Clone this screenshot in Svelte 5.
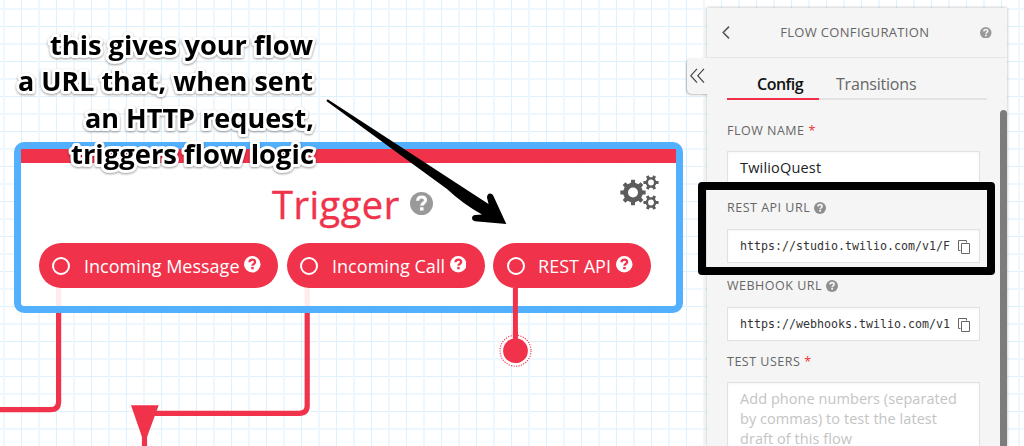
<script>
  const triggers = [
    { label: 'Incoming Message', width: 239.5, text: 155.5 },
    { label: 'Incoming Call', width: 198, text: 113 },
    { label: 'REST API', width: 158, text: 73 }
  ];
  const note = ['this gives your flow', 'a URL that, when sent', 'an HTTP request,', 'triggers flow logic'];

  function gear(cx, cy, outer, inner, hole, teeth) {
    const step = (Math.PI * 2) / teeth;
    const pt = (r, a) => `${(cx + r * Math.cos(a)).toFixed(2)} ${(cy + r * Math.sin(a)).toFixed(2)}`;
    let d = '';
    for (let i = 0; i < teeth; i++) {
      const a = i * step - Math.PI / 2 + (teeth === 6 ? step / 2 : 0);
      d += `${i ? 'L' : 'M'}${pt(inner, a - step * 0.27)}L${pt(outer, a - step * 0.19)}L${pt(outer, a + step * 0.19)}L${pt(inner, a + step * 0.27)}`;
    }
    return `${d}ZM${cx - hole} ${cy}a${hole} ${hole} 0 1 0 ${hole * 2} 0a${hole} ${hole} 0 1 0 ${-hole * 2} 0Z`;
  }
  const gears = gear(13, 17.5, 12.8, 9.9, 5, 8) + gear(31, 7.5, 7.7, 5.4, 2.9, 6) + gear(31, 27.5, 7.7, 5.4, 2.9, 6);
</script>

{#snippet help(size, bg, fg)}
  <svg class="help" width={size} height={size} viewBox="0 0 16 16">
    <circle cx="8" cy="8" r="8" fill={bg} />
    <path d="M5.300 6.100C5.400 4.400 6.500 3.500 8.100 3.500c1.600 0 2.700.9 2.700 2.300 0 2-2.600 1.900-2.600 3.700" fill="none" stroke={fg} stroke-width="2.200" />
    <rect x="7" y="10.600" width="2.400" height="2.300" fill={fg} />
  </svg>
{/snippet}

{#snippet copy()}
  <svg class="copy" width="14" height="15" viewBox="0 0 14 15" fill="none" stroke="#666" stroke-width="1">
    <path d="M3.500 11.500H1.500V1.500h8v2M4.500 4.500h8v10h-8z" />
  </svg>
{/snippet}

<main class="canvas">
  <svg class="layer" width="1024" height="446" fill="none" stroke="#f0324b" stroke-width="5.200">
    <path d="M58.600 288V402q0 7.700-8 7.700H0" />
    <path d="M307.200 288V405.500q0 7.800-8 7.800H150" />
    <path d="M144.500 430V446" />
    <path d="M131 405.300h27.700L147 437h-5z" fill="#f0324b" stroke="none" />
  </svg>

  <section class="node">
    <div class="bar"></div>
    <header>
      <h1>Trigger</h1>
      {@render help(23, '#999', '#fff')}
      <svg class="gears" width="40" height="36" viewBox="0 0 40 36"><path d={gears} fill="#5c5c5c" fill-rule="evenodd" /></svg>
    </header>
    <div class="pills">
      {#each triggers as t}
        <div class="pill" style:width="{t.width}px">
          <i></i>
          <svg class="name" width={t.text} height="30"><text x="0" y="22" textLength={t.text} lengthAdjust="spacingAndGlyphs">{t.label}</text></svg>
          {@render help(16.5, '#fff', '#f0324b')}
        </div>
      {/each}
    </div>
  </section>

  <svg class="layer" width="1024" height="446">
    <path d="M515.400 288v56" stroke="#f0324b" stroke-width="5" />
    <circle cx="515.500" cy="350.700" r="15.500" fill="#fff" stroke="#f0324b" stroke-width="1.100" stroke-dasharray="1.200 1.300" />
    <path d="M515.400 330v20" stroke="#f0324b" stroke-width="5" />
    <circle cx="515.500" cy="350.700" r="12.400" fill="#f0324b" />
  </svg>

  <aside class="panel">
    <button class="collapse" aria-label="Expand panel">
      <svg width="15" height="16" viewBox="0 0 15 16" fill="none" stroke="#444" stroke-width="1.200"><path d="M7 .8.800 7.700 7 14.600M14 .8 7.800 7.700 14 14.600" /></svg>
    </button>
    <div class="head">
      <svg width="8" height="13" viewBox="0 0 8 13" fill="none" stroke="#555" stroke-width="1.500"><path d="M7 .6 1.200 6.500 7 12.400" /></svg>
      <span class="title">FLOW CONFIGURATION</span>
      {@render help(11.5, '#999', '#f5f5f5')}
    </div>
    <nav>
      <span class="tab active">Config</span>
      <span class="tab">Transitions</span>
    </nav>
    <div class="form">
      <div class="label fn"><span>FLOW NAME</span><b>*</b></div>
      <div class="input name-in">TwilioQuest</div>
      <div class="label rest"><span>REST API URL</span>{@render help(12, '#8f8f8f', '#f5f5f5')}</div>
      <div class="input mono"><span>https://studio.twilio.com/v1/F</span>{@render copy()}</div>
      <div class="label web"><span>WEBHOOK URL</span>{@render help(12, '#8f8f8f', '#f5f5f5')}</div>
      <div class="input mono"><span>https://webhooks.twilio.com/v1</span>{@render copy()}</div>
      <div class="label users"><span>TEST USERS</span><b>*</b></div>
      <div class="area">Add phone numbers (separated<br />by commas) to test the latest<br />draft of this flow</div>
    </div>
    <div class="scroll"></div>
  </aside>

  <div class="highlight"></div>
  <svg class="layer" width="1024" height="446">
    <g class="note">
      {#each note as line, i}
        <text x={i > 1 ? 314 : 313} y={54.700 + i * 36.500} textLength={[263, 295, 229, 243][i]} lengthAdjust="spacingAndGlyphs">{line}</text>
      {/each}
    </g>
    <path d="M328 99.500 488.500 204 487 197.500q.2-3.700 3-4 2.200 0 3.200 2L506.300 224 475 221.300q-3-.8-3-3.300.2-2.800 3.500-3l6.500-.5Q463 204 447 189L327 101.500q-1.200-2 1-2z" />
  </svg>
</main>

<style>
  .canvas {
    position: relative;
    width: 1024px;
    height: 446px;
    overflow: hidden;
    font-family: "Open Sans", "Noto Sans", sans-serif;
    background-color: #fff;
    background-image:
      linear-gradient(90deg, transparent 3px, #eef7fe 3px, #eef7fe 5px, transparent 5px, transparent 21px, #e0f1fe 21px, #e0f1fe 22px, transparent 22px),
      linear-gradient(transparent 8px, #eef7fe 8px, #eef7fe 10px, transparent 10px, transparent 26px, #e0f1fe 26px, #e0f1fe 27px, transparent 27px);
    background-size: 35px 35px;
  }
  .layer { position: absolute; left: 0; top: 0; pointer-events: none; }
  .help, .copy { display: block; flex: none; }
  .node {
    position: absolute;
    left: 14px;
    top: 141.500px;
    width: 668.500px;
    height: 171.500px;
    box-sizing: border-box;
    border: 7px solid #52b0ff;
    border-radius: 10px;
    background: rgba(255, 255, 255, .9);
    background-clip: padding-box;
  }
  .bar { height: 14px; background: #f0324b; }
  .node header { position: relative; display: flex; gap: 9px; padding-left: 251px; height: 80px; box-sizing: border-box; padding-top: 29.500px; }
  h1 { margin: 0; width: 129px; font-size: 38px; line-height: 52px; font-weight: 500; color: #f0324b; letter-spacing: .500px; -webkit-text-stroke: .400px #f0324b; margin-top: -14px; white-space: nowrap; }
  .gears { position: absolute; right: 15.500px; top: 12px; }
  .pills { display: flex; gap: 8.500px; padding-left: 17.500px; }
  .pill { display: flex; align-items: center; box-sizing: border-box; height: 45.500px; padding-left: 13.500px; border-radius: 23px; background: #f0324b; color: #fff; }
  .pill i { width: 18px; height: 18px; flex: none; box-sizing: border-box; border: 2px solid #fff; border-radius: 50%; margin: 1px 13.500px 0 0; }
  .name { flex: none; overflow: visible; font-size: 18px; fill: #fff; margin-top: 1px; }
  .pill .help { margin: 0 0 2px 5px; }
  .panel { position: absolute; left: 707px; top: 8px; width: 300px; height: 438px; background: #f5f5f5; box-shadow: 0 0 3px rgba(0, 0, 0, .3); color: #666; }
  .collapse { position: absolute; left: -20px; top: 50px; width: 21px; height: 36px; padding: 0 0 0 3px; border: 0; border-radius: 5px 0 0 5px; background: #f5f5f5; box-shadow: -1px 1px 2px rgba(0, 0, 0, .25); clip-path: inset(-3px 0 -4px -4px); display: flex; align-items: center; }
  .head { display: flex; align-items: center; height: 50px; box-sizing: border-box; border-bottom: 1px solid #e7e7e7; padding: 0 15px; justify-content: space-between; }
  .title { font-size: 13px; letter-spacing: .320px; margin: -2px 0 0 -1px; }
  nav { display: flex; height: 42px; box-sizing: border-box; margin: 0 20px; width: 260px; border-bottom: 2px solid #e3e3e3; }
  .tab { font-size: 16px; line-height: 22px; padding: 15px 17px 0; height: 42px; box-sizing: border-box; letter-spacing: -.200px; }
  .tab + .tab { letter-spacing: -.200px; }
  .active { width: 92px; padding: 15px 0 0 30px; color: #111; font-weight: 600; letter-spacing: -.500px; border-bottom: 2px solid #f22f46; }
  .form { padding: 0 27px 0 20px; }
  .label { display: flex; align-items: center; gap: 4px; font-size: 12.500px; line-height: 20px; height: 20px; letter-spacing: .500px; }
  .label b { color: #e33; font-weight: 400; }
  .fn { margin-top: 21px; }
  .input, .area { box-sizing: border-box; border: 1px solid #e1e1e1; background: #fff; box-shadow: inset 0 1px 3px rgba(0, 0, 0, .04); padding: 0 12px; color: #222; white-space: nowrap; }
  .input { display: flex; align-items: center; height: 34px; font-size: 14.500px; }
  .name-in { margin-top: 10px; padding-bottom: 2px; letter-spacing: .180px; }
  .rest { margin-top: 13px; }
  .mono { margin-top: 11px; font: 11.640px "DejaVu Sans Mono", monospace; color: #333; justify-content: space-between; padding-right: 8px; }
  .web { margin-top: 13px; }
  .users { margin-top: 11px; }
  .area { height: 90px; margin-top: 10px; padding-top: 6px; font-size: 14.500px; line-height: 20px; letter-spacing: .060px; color: #c4c4c4; }
  .scroll { position: absolute; right: 0; top: 102px; width: 7px; bottom: 0; border-radius: 4px 4px 0 0; background: #7c7c7c; }
  .highlight { position: absolute; left: 698px; top: 182px; width: 297px; height: 93px; box-sizing: border-box; border: 8px solid #000; border-radius: 4px; }
  .note { font: 700 27.500px "Open Sans", sans-serif; text-anchor: end; fill: #000; stroke: #fff; stroke-width: 6px; stroke-linejoin: round; paint-order: stroke; filter: drop-shadow(0 1px 1px rgba(0, 0, 0, .4)); }
</style>
